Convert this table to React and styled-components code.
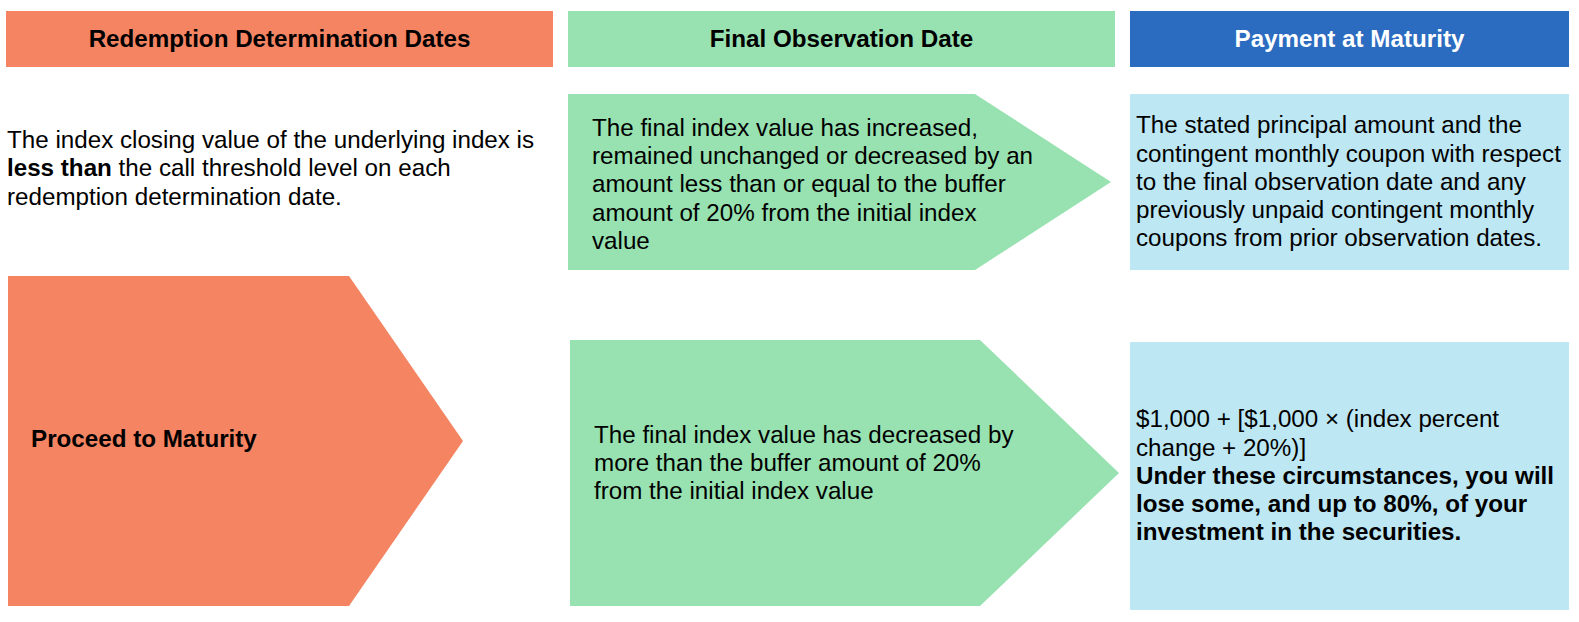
import React from "react";
import styled, { createGlobalStyle } from "styled-components";

const GlobalStyle = createGlobalStyle`
  html, body {
    margin: 0;
    padding: 0;
    background: #ffffff;
  }
  body {
    font-family: "Liberation Sans", Arial, sans-serif;
    color: #000000;
  }
`;

const Page = styled.div`
  width: 1579px;
  height: 622px;
  box-sizing: border-box;
  padding: 11px 0 0 6px;
  display: grid;
  grid-template-columns: 547px 547px 439px;
  column-gap: 15px;
  align-items: start;
`;

const Column = styled.div`
  display: flex;
  flex-direction: column;
`;

const Header = styled.div`
  height: 56px;
  display: flex;
  align-items: center;
  justify-content: center;
  background: ${(p) => p.$bg};
  color: ${(p) => p.$fg || "#000000"};
  font-size: 24.2px;
  font-weight: 700;
  line-height: 28px;
`;

const Lead = styled.div`
  height: 209px;
  box-sizing: border-box;
  padding: 0 0 6px 1px;
  display: flex;
  align-items: center;
  font-size: 24.2px;
  line-height: 28.3px;
`;

const Arrow = styled.div`
  box-sizing: border-box;
  width: ${(p) => p.$w}px;
  height: ${(p) => p.$h}px;
  margin: ${(p) => p.$mt}px 0 0 ${(p) => p.$ml}px;
  padding: ${(p) => p.$pad};
  background: ${(p) => p.$bg};
  clip-path: polygon(
    0 0,
    calc(100% - ${(p) => p.$depth}px) 0,
    100% 50%,
    calc(100% - ${(p) => p.$depth}px) 100%,
    0 100%
  );
  display: flex;
  align-items: center;
  font-size: 24.2px;
  line-height: 28.3px;
  white-space: nowrap;
`;

const Box = styled.div`
  box-sizing: border-box;
  height: ${(p) => p.$h}px;
  margin-top: ${(p) => p.$mt}px;
  padding: 0 2px 0 6px;
  background: #bde7f3;
  display: flex;
  align-items: center;
  font-size: 24.2px;
  line-height: 28.3px;
`;

const Strong = styled.b`
  font-weight: 700;
`;

const BoldLabel = styled.span`
  font-weight: 700;
`;

export default function App() {
  return (
    <>
      <GlobalStyle />
      <Page>
        <Column>
          <Header $bg="#f48462">Redemption Determination Dates</Header>
          <Lead>
            <div>
              The index closing value of the underlying index is{" "}
              <Strong>less than</Strong> the call threshold level on each
              redemption determination date.
            </div>
          </Lead>
          <Arrow
            $bg="#f48462"
            $w={455}
            $h={330}
            $mt={0}
            $ml={2}
            $depth={114}
            $pad="0 0 4px 23px"
          >
            <BoldLabel>Proceed to Maturity</BoldLabel>
          </Arrow>
        </Column>

        <Column>
          <Header $bg="#98e2b1">Final Observation Date</Header>
          <Arrow
            $bg="#98e2b1"
            $w={543}
            $h={176}
            $mt={27}
            $ml={0}
            $depth={136}
            $pad="5px 0 0 24px"
          >
            <div>
              The final index value has increased,
              <br />
              remained unchanged or decreased by an
              <br />
              amount less than or equal to the buffer
              <br />
              amount of 20% from the initial index
              <br />
              value
            </div>
          </Arrow>
          <Arrow
            $bg="#98e2b1"
            $w={549}
            $h={266}
            $mt={70}
            $ml={2}
            $depth={139}
            $pad="0 0 20px 24px"
          >
            <div>
              The final index value has decreased by
              <br />
              more than the buffer amount of 20%
              <br />
              from the initial index value
            </div>
          </Arrow>
        </Column>

        <Column>
          <Header $bg="#2b6bc0" $fg="#ffffff">
            Payment at Maturity
          </Header>
          <Box $h={176} $mt={27}>
            <div>
              The stated principal amount and the contingent monthly coupon
              with respect to the final observation date and any previously
              unpaid contingent monthly coupons from prior observation dates.
            </div>
          </Box>
          <Box $h={268} $mt={72}>
            <div>
              $1,000 + [$1,000 × (index percent change + 20%)]
              <br />
              <Strong>
                Under these circumstances, you will lose some, and up to 80%,
                of your investment in the securities.
              </Strong>
            </div>
          </Box>
        </Column>
      </Page>
    </>
  );
}
